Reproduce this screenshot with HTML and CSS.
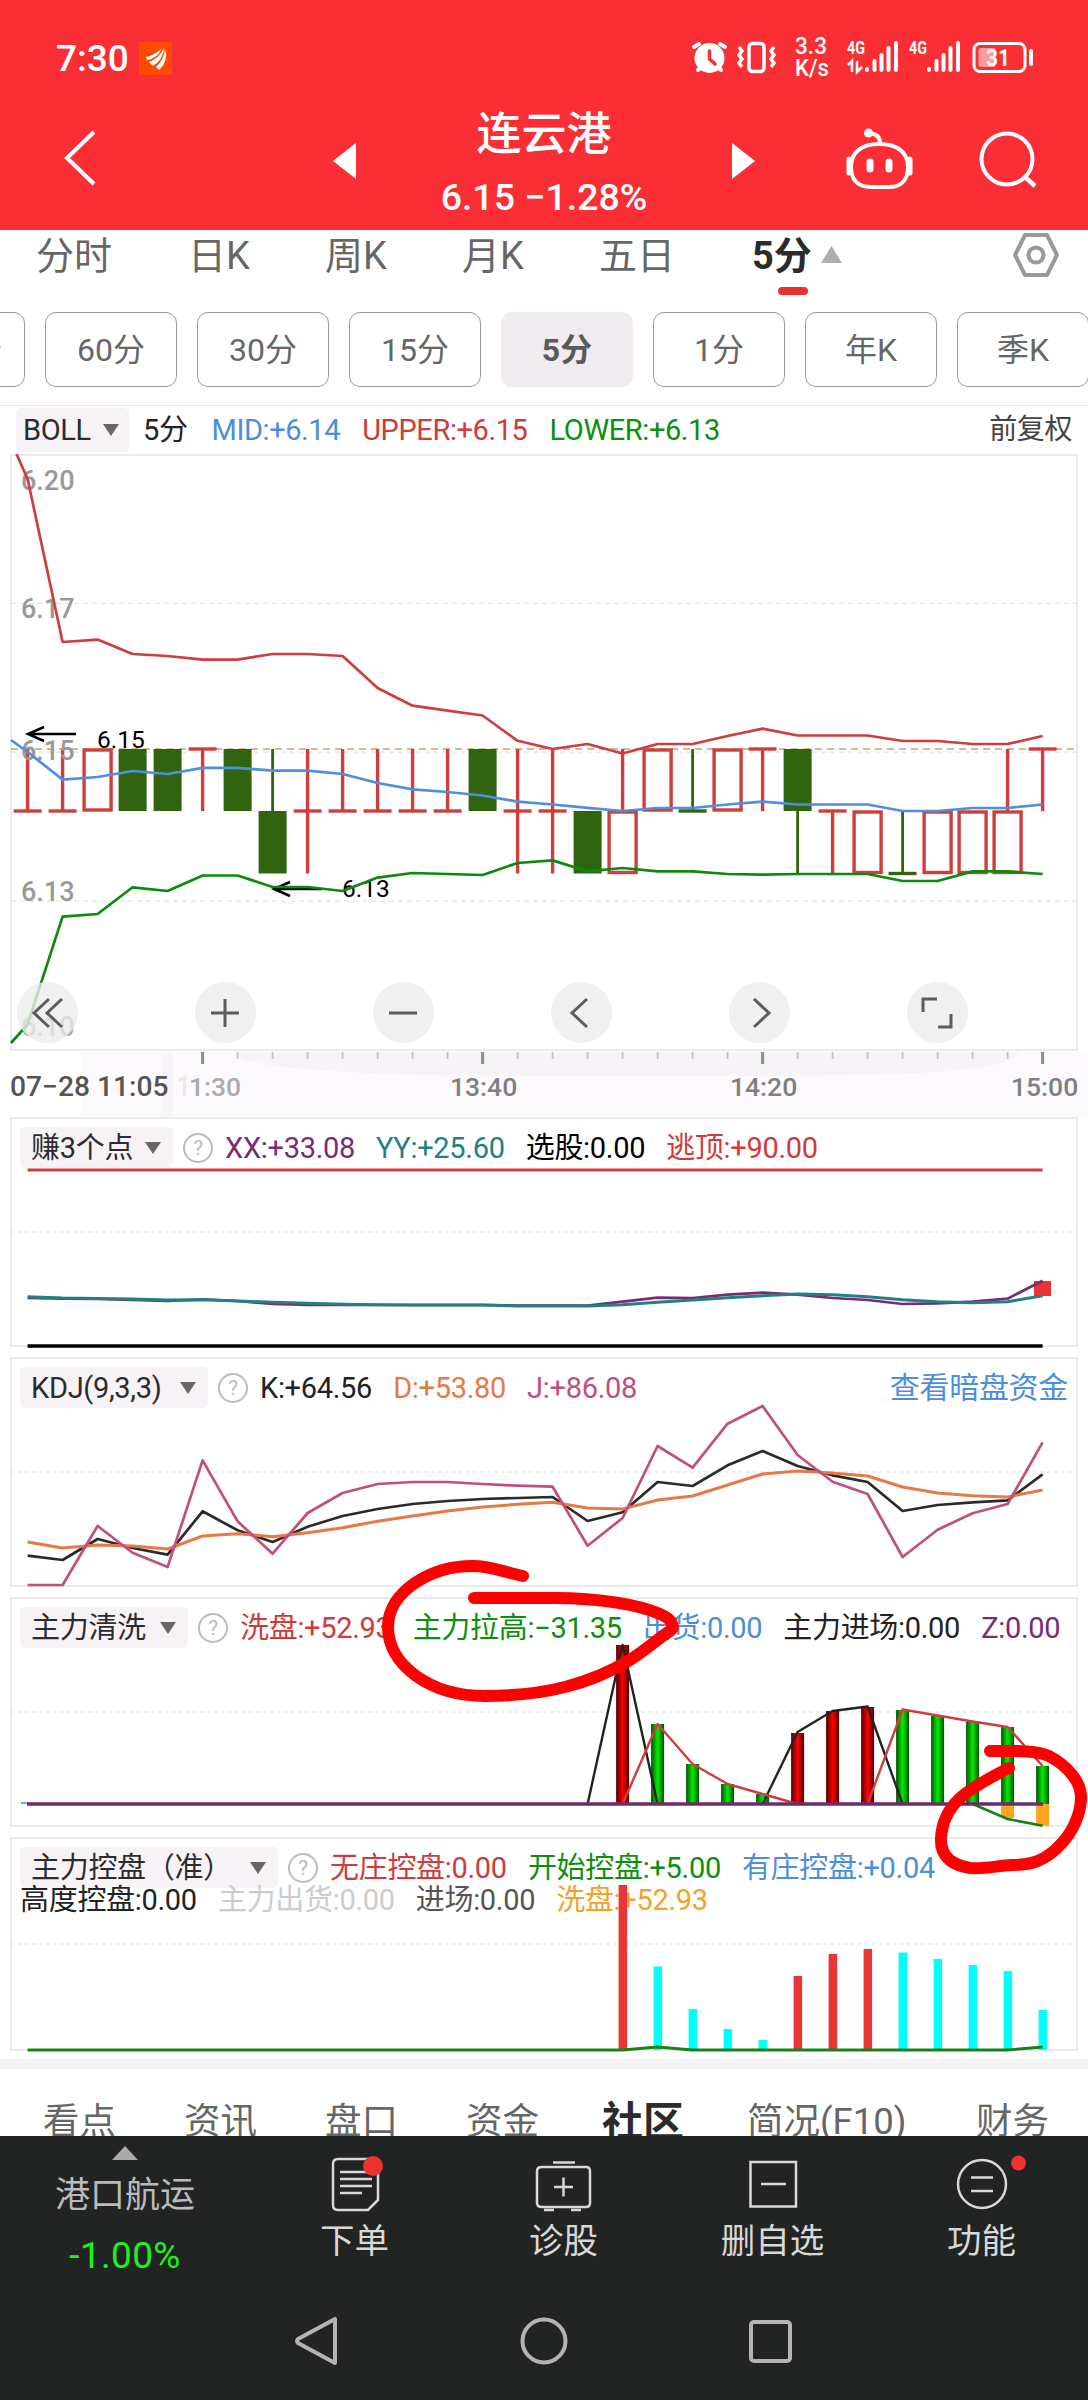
FILE: index.html
```
<!DOCTYPE html>
<html lang="zh-CN">

<head>
    <meta charset="UTF-8">
    <meta name="viewport" content="width=device-width, initial-scale=1.0">
    <title>连云港 5分</title>
    <link rel="stylesheet" href="styles.css">
</head>

<body>

    <header>
        <div class="status-bar">
            <span class="time">7:30</span>
            <svg class="app-icon" width="33" height="33" viewBox="0 0 33 33">
                <rect width="33" height="33" fill="#ff4a00" />
                <path d="M7 15 Q16 13 23 6 Q19 16 8 18 Z M10 20 Q20 16 25 6 Q24 18 14 24 Z M17 25 Q25 18 26 7 Q30 19 20 28 Z" fill="#fff" />
            </svg>
            <svg class="status-icons" width="346" height="48" viewBox="690 34 346 48">
                <!-- alarm -->
                <g stroke="#fff" stroke-width="4" stroke-linecap="round" fill="none">
                    <path d="M693 47 L698 44 M719 44 L724 47 M697 70 L701 66 M720 70 L716 66" />
                </g>
                <circle cx="708.5" cy="58" r="15" fill="#fff" />
                <path d="M708.5 51 V59 L714 64" stroke="#fa2e35" stroke-width="3.5" fill="none" stroke-linecap="round" />
                <!-- vibrate -->
                <rect x="748" y="43.5" width="15" height="28" rx="3.5" fill="none" stroke="#fff" stroke-width="3.5" />
                <path d="M738 47 l3 4 l-3 4 l3 4 l-3 4 l3 4 M773 47 l-3 4 l3 4 l-3 4 l3 4 l-3 4" stroke="#fff" stroke-width="3.5" fill="none" />
                <text x="794" y="54" class="net" textLength="32" lengthAdjust="spacingAndGlyphs">3.3</text>
                <text x="794" y="76" class="net" textLength="34" lengthAdjust="spacingAndGlyphs">K/s</text>
                <text x="846" y="54" class="sim" textLength="18" lengthAdjust="spacingAndGlyphs">4G</text>
                <text x="908" y="54" class="sim" textLength="18" lengthAdjust="spacingAndGlyphs">4G</text>
                <path d="M847 65 L851 61 V72 M856 61 V72 L861 67" stroke="#fff" stroke-width="2.5" fill="none" />
                <g stroke="#fff" stroke-width="4" stroke-linecap="round">
                    <path d="M866 69 v1 M873.5 61 v9 M880.5 55 v15 M887.5 48 v22 M895 43 v27" />
                    <path d="M928 69 v1 M935.5 61 v9 M942.5 55 v15 M949.5 48 v22 M957 43 v27" />
                </g>
                <rect x="973" y="43.5" width="51" height="28" rx="6" fill="none" stroke="#fff" stroke-width="3" />
                <rect x="977.5" y="48" width="17" height="19" rx="2" fill="#fd9a9d" />
                <rect x="1028" y="49" width="4" height="17" rx="2" fill="#fff" />
                <text x="985" y="66" class="battery" textLength="24" lengthAdjust="spacingAndGlyphs">31</text>
            </svg>
        </div>
        <div class="title-bar">
            <svg class="back" width="36" height="58" viewBox="0 0 36 58">
                <path d="M32 3 L5 29 L32 55" stroke="#fff" stroke-width="4" fill="none" />
            </svg>
            <svg class="prev" width="23" height="36" viewBox="0 0 23 36"><path d="M23 0 V36 L0 18 Z" fill="#fff" /></svg>
            <div class="stock">
                <h1>连云港</h1>
                <p>6.15 −1.28%</p>
            </div>
            <svg class="next" width="23" height="36" viewBox="0 0 23 36"><path d="M0 0 V36 L23 18 Z" fill="#fff" /></svg>
            <svg class="robot" width="68" height="62" viewBox="844 128 68 62">
                <path d="M868 133 Q879 134 879 143" stroke="#fff" stroke-width="4" fill="none" />
                <circle cx="867.5" cy="133" r="4.5" fill="#fff" />
                <path d="M878 144 C896 144 907 152 907 167 C907 180 900 187 888 187 H870 C857 187 850 180 850 167 C850 152 861 144 878 144 Z" stroke="#fff" stroke-width="4" fill="none" />
                <path d="M848 159 V173 M909 159 V173" stroke="#fff" stroke-width="5" stroke-linecap="round" />
                <path d="M869 162 V169 M888 162 V169" stroke="#fff" stroke-width="7" stroke-linecap="round" />
            </svg>
            <svg class="search" width="60" height="60" viewBox="977 130 60 60">
                <circle cx="1006" cy="159" r="25.5" stroke="#fff" stroke-width="4" fill="none" />
                <path d="M1024 177 L1034 186" stroke="#fff" stroke-width="4.5" />
            </svg>
        </div>
    </header>

    <!-- Period tabs -->
    <nav class="tabs">
        <a>分时</a>
        <a>日K</a>
        <a>周K</a>
        <a>月K</a>
        <a>五日</a>
        <a class="active">5分</a>
        <svg class="up" width="21" height="17" viewBox="0 0 21 17"><path d="M0 17 L10.5 0 L21 17 Z" fill="#b0adb0" /></svg>
        <svg class="settings" width="48" height="46" viewBox="0 0 48 46">
            <path d="M13 3 H35 L45 23 L35 43 H13 L3 23 Z" fill="none" stroke="#999" stroke-width="4" stroke-linejoin="round" />
            <circle cx="24" cy="23" r="7.5" fill="none" stroke="#999" stroke-width="4" />
        </svg>
    </nav>
    <div class="pills">
        <span>120分</span>
        <span>60分</span>
        <span>30分</span>
        <span>15分</span>
        <span class="active">5分</span>
        <span>1分</span>
        <span>年K</span>
        <span>季K</span>
    </div>

    <main class="charts">
        <div class="legend boll">
            <b class="pick">BOLL<i></i></b>
            <span class="ink">5分</span>
            <span class="blue">MID:+6.14</span>
            <span class="red">UPPER:+6.15</span>
            <span class="green">LOWER:+6.13</span>
            <span class="right">前复权</span>
        </div>

        <!-- Price chart -->
        <div class="price">
            <svg id="price" width="1088" height="598" viewBox="0 454 1088 598"></svg>
            <div class="tools">
                <button><svg width="60" height="60" viewBox="0 0 60 60"><path d="M32 16 L17 30 L32 44 M45 16 L30 30 L45 44" /></svg></button>
                <button><svg width="60" height="60" viewBox="0 0 60 60"><path d="M16 30 H44 M30 16 V44" /></svg></button>
                <button><svg width="60" height="60" viewBox="0 0 60 60"><path d="M16 30 H44" /></svg></button>
                <button><svg width="60" height="60" viewBox="0 0 60 60"><path d="M36 16 L21 30 L36 44" /></svg></button>
                <button><svg width="60" height="60" viewBox="0 0 60 60"><path d="M25 16 L40 30 L25 44" /></svg></button>
                <button><svg width="60" height="60" viewBox="0 0 60 60"><path d="M30 16 H16 V29 M44 31 V44 H31" /></svg></button>
            </div>
        </div>
        <svg id="axis" width="1088" height="65" viewBox="0 1052 1088 65"></svg>

        <section class="panel">
            <div class="legend">
                <b class="pick points">赚3个点<i></i></b><em>?</em>
                <span class="purple">XX:+33.08</span>
                <span class="teal">YY:+25.60</span>
                <span class="black">选股:0.00</span>
                <span class="red">逃顶:+90.00</span>
            </div>
            <svg id="points" width="1088" height="240" viewBox="0 1117 1088 240"></svg>
        </section>

        <section class="panel">
            <div class="legend">
                <b class="pick kdj">KDJ(9,3,3)<i></i></b><em>?</em>
                <span class="ink">K:+64.56</span>
                <span class="orange">D:+53.80</span>
                <span class="pink">J:+86.08</span>
                <span class="right blue more">查看暗盘资金</span>
            </div>
            <svg id="kdj" width="1088" height="240" viewBox="0 1357 1088 240"></svg>
        </section>

        <section class="panel">
            <div class="legend">
                <b class="pick wash">主力清洗<i></i></b><em>?</em>
                <span class="red">洗盘:+52.93</span>
                <span class="green">主力拉高:−31.35</span>
                <span class="blue">出货:0.00</span>
                <span class="ink">主力进场:0.00</span>
                <span class="purple">Z:0.00</span>
            </div>
            <svg id="wash" width="1088" height="240" viewBox="0 1597 1088 240"></svg>
        </section>

        <section class="panel last">
            <div class="legend">
                <b class="pick control">主力控盘（准）<i></i></b><em>?</em>
                <span class="red">无庄控盘:0.00</span>
                <span class="green">开始控盘:+5.00</span>
                <span class="blue">有庄控盘:+0.04</span>
            </div>
            <div class="legend second">
                <span class="ink">高度控盘:0.00</span>
                <span class="faint">主力出货:0.00</span>
                <span class="gray">进场:0.00</span>
                <span class="amber">洗盘:+52.93</span>
            </div>
            <svg id="control" width="1088" height="222" viewBox="0 1837 1088 222"></svg>
        </section>

        <!-- Hand drawn marks over the charts -->
        <svg class="marks" width="1088" height="330" viewBox="0 1555 1088 330">
            <path d="M523 1576 C500 1571 490 1566 473 1566 C430 1566 388 1592 388 1627 C388 1665 430 1696 485 1696 C545 1696 590 1684 630 1660 C650 1647 660 1637 670 1631 C676 1627 672 1619 660 1614 C640 1605 600 1598 555 1598 H474" />
            <path d="M990 1751 C1015 1751 1035 1750 1049 1756 C1068 1766 1081 1782 1081 1797 C1081 1815 1072 1832 1062 1843 C1045 1862 1030 1865 1012 1865 C996 1866 985 1869 970 1868 C950 1865 940 1855 941 1838 C943 1805 965 1790 1009 1768" />
        </svg>
    </main>

    <nav class="news-tabs">
        <a>看点</a>
        <a>资讯</a>
        <a>盘口</a>
        <a>资金</a>
        <a class="active">社区</a>
        <a>简况(F10)</a>
        <a>财务</a>
    </nav>

    <footer>
        <div class="actions">
            <div class="sector">
                <svg width="26" height="14" viewBox="0 0 26 14"><path d="M0 14 L13 0 L26 14 Z" fill="#aaa" /></svg>
                <span>港口航运</span>
                <strong>-1.00%</strong>
            </div>
            <div class="action">
                <svg width="70" height="64" viewBox="320 2154 70 64">
                    <path d="M338 2159 H372 Q378 2159 378 2165 V2200 L368 2210 H338 Q333 2210 333 2205 V2164 Q333 2159 338 2159 Z M340 2172 H372 M340 2179 H372 M340 2186 H372 M340 2193 H362" />
                    <circle class="dot" cx="373" cy="2166" r="10" />
                </svg>
                <span>下单</span>
            </div>
            <div class="action">
                <svg width="70" height="64" viewBox="530 2154 70 64">
                    <path d="M543 2167 H587 Q591 2167 591 2171 V2203 Q591 2207 587 2207 H543 Q538 2207 538 2203 V2171 Q538 2167 543 2167 Z M554 2162.5 H576 M555 2187 H574 M564.5 2177.5 V2196.5 M545 2210 H555 M572 2210 H582" />
                </svg>
                <span>诊股</span>
            </div>
            <div class="action">
                <svg width="70" height="64" viewBox="738 2154 70 64">
                    <path d="M750.5 2162 H796 V2206.5 H750.5 Z M761 2184 H786" />
                </svg>
                <span>删自选</span>
            </div>
            <div class="action">
                <svg width="90" height="64" viewBox="937 2154 90 64">
                    <circle cx="982" cy="2184" r="24" />
                    <path d="M971 2177.5 H993 M971 2191 H993" />
                    <circle class="dot" cx="1018.5" cy="2163" r="7.5" />
                </svg>
                <span>功能</span>
            </div>
        </div>
        <div class="system-nav">
            <svg width="48" height="56" viewBox="0 0 48 56"><path d="M41 6 V50 L4 30 Q2 28 4 26 Z" /></svg>
            <svg width="56" height="56" viewBox="0 0 56 56"><circle cx="28" cy="28" r="21.5" /></svg>
            <svg width="48" height="56" viewBox="0 0 48 56"><rect x="5" y="9" width="39" height="39" rx="3" /></svg>
        </div>
    </footer>

    <script>
        const RED = '#cd3e3c', GREEN = '#0d8a0d', BLUE = '#4f8fdb';

        function x(i) {
            return 27.6 + 35 * i;
        }

        function line(x1, y1, x2, y2, color, width, extra) {
            return `<line x1="${x1}" y1="${y1}" x2="${x2}" y2="${y2}" stroke="${color}" stroke-width="${width}" ${extra || ''}/>`;
        }

        function rect(left, top, w, h, fill) {
            return `<rect x="${left}" y="${top}" width="${w}" height="${h}" fill="${fill}"/>`;
        }

        function text(left, y, size, color, value, weight) {
            return `<text x="${left}" y="${y}" font-size="${size}" fill="${color}" font-weight="${weight || 400}">${value}</text>`;
        }

        function curve(values, color, width, start, before) {
            const points = values.map((y, i) => x(i + (start || 0)) + ',' + y);
            if (before) points.unshift(before);
            return `<polyline points="${points.join(' ')}" fill="none" stroke="${color}" stroke-width="${width}" stroke-linejoin="round"/>`;
        }

        function frame(top, bottom, grid) {
            return `<rect x="11" y="${top}" width="1066" height="${bottom - top}" fill="none" stroke="#ebebeb" stroke-width="2"/>` +
                line(11, grid, 1077, grid, '#e8e8e8', 1.6, 'stroke-dasharray="3.5 3.5"');
        }

        // Candles: [kind, wick top, wick bottom, body top, body bottom]
        const A = 749, B = 811, C = 873.5;
        const candles = [
            ['r', A, B, B, B], ['r', A, B, B, B], ['r', A, A, A, B], ['g', A, A, A, B], ['g', A, A, A, B],
            ['r', A, B, A, A], ['g', A, A, A, B], ['g', A, B, B, C], ['r', A, C, B, B], ['r', A, B, B, B],
            ['r', A, B, B, B], ['r', A, B, B, B], ['r', A, B, B, B], ['g', A, A, A, B], ['r', A, C, B, B],
            ['r', A, C, B, B], ['g', B, B, B, C], ['r', A, B, B, C], ['r', A, A, A, B], ['g', A, B, B, B],
            ['r', A, A, A, B], ['r', A, B, A, A], ['g', B, C, A, B], ['r', B, C, B, B], ['r', B, B, B, C],
            ['g', B, C, C, C], ['r', B, B, B, C], ['r', B, B, B, C], ['r', A, B, B, C], ['r', A, B, A, A]
        ];
        const upper = [479, 642, 639.6, 654, 656, 659.6, 659.6, 654, 654, 656, 688, 705.7, 710.6, 715.5, 740.8,
            749, 744, 753.5, 744, 744, 736, 728.6, 735.5, 735.5, 735.5, 741, 741, 744, 744, 736];
        const mid = [752, 779.6, 777, 771, 774, 767.8, 767.8, 770.6, 770.6, 774, 783, 789.4, 792, 795.5, 801.6,
            804.5, 807.8, 811, 808, 808, 804.5, 801.6, 804.5, 804.5, 804.5, 811, 811, 808, 808, 804.5];
        const lower = [1024.5, 916.7, 914, 887.3, 891, 875.5, 875.5, 887, 887, 891, 877.6, 873, 874, 875, 863,
            860.4, 871.4, 868, 871.4, 871.4, 874, 874.7, 874, 874, 874, 881, 881, 871.4, 871.4, 874];

        let price = '<rect x="11" y="455" width="1066" height="595" fill="none" stroke="#ebebeb" stroke-width="2"/>';
        [603.3, 752.2, 901.2].forEach(y => {
            price += line(11, y, 1077, y, '#e4e4e4', 1.3, 'stroke-dasharray="5 4"');
        });
        price += line(11, A, 1077, A, '#c9a26a', 1.5, 'stroke-dasharray="7 5"');
        candles.forEach((c, i) => {
            const red = c[0] === 'r';
            const color = red ? RED : '#30640f';
            if (c[1] !== c[2]) price += line(x(i), c[1], x(i), c[2], color, red ? 3.4 : 2.8);
            if (c[3] === c[4]) {
                price += line(x(i) - 14, c[3], x(i) + 14, c[3], color, 3.4);
            } else if (red) {
                price += `<rect x="${x(i) - 13.5}" y="${c[3] + 1}" width="27" height="${c[4] - c[3] - 2}" fill="#fff" stroke="${color}" stroke-width="3.4"/>`;
            } else {
                price += rect(x(i) - 14, c[3], 28, c[4] - c[3], color);
            }
        });
        price += text(21, 490, 27, '#999', '6.20', 500) + text(21, 618, 27, '#999', '6.17', 500) +
            text(21, 760, 27, '#999', '6.15', 500) + text(21, 901, 27, '#999', '6.13', 500) +
            text(21, 1036, 27, '#999', '6.10', 500);
        price += '<path d="M76 734 H28 M44 727 L28 734 L44 741 M322 889 H274 M290 882 L274 889 L290 896" stroke="#000" stroke-width="2.5" fill="none"/>';
        price += text(97, 748, 24.5, '#000', '6.15') + text(342, 897, 24.5, '#000', '6.13');
        price += curve(upper, RED, 2.7, 0, '16.5,454') + curve(mid, BLUE, 2.7, 0, '11,740') + curve(lower, GREEN, 2.7, 0, '11,1043');
        document.getElementById('price').innerHTML = price;

        // Time axis
        let axis = rect(81, 1052, 1007, 66, '#fdfafd') + rect(161, 1052, 12, 66, '#f8f5f8') +
            '<path d="M235 1052 H1020 Q1010 1066 960 1070 Q900 1077 600 1076 Q240 1078 235 1052 Z" fill="#f7f4f7"/>';
        for (let i = 5; i < 30; i++) {
            const major = i % 8 === 5;
            axis += line(x(i), 1052, x(i), major ? 1064 : 1059, major ? '#8c8c8c' : '#c2c0c2', major ? 3 : 1.8);
        }
        axis += text(176, 1096, 27, '#eae6ea', '1', 500) + text(189, 1096, 26.5, '#aaa', '1:30', 500) +
            text(450, 1096, 26.5, '#808080', '13:40', 500) + text(730, 1096, 26.5, '#808080', '14:20', 500) +
            text(1011, 1096, 26.5, '#808080', '15:00', 500) + text(10, 1096, 28.2, '#555', '07−28 11:05', 500);
        document.getElementById('axis').innerHTML = axis;

        const xx = [1298, 1298.7, 1299, 1300, 1301, 1299.3, 1301, 1304, 1305, 1305, 1305, 1305, 1305, 1305, 1305.6,
            1305.6, 1305.6, 1301.7, 1297.7, 1298, 1294.7, 1292.7, 1294.7, 1298, 1300, 1304, 1303.3, 1301.7, 1298.7, 1280.7];
        const yy = [1296.7, 1298, 1298.5, 1299, 1300, 1299.7, 1301, 1302.3, 1303.3, 1304.3, 1304.7, 1305, 1305, 1305, 1306,
            1306, 1306, 1304.7, 1302.3, 1300, 1297.7, 1295.7, 1294, 1294.7, 1296.7, 1299.7, 1301.7, 1302.7, 1301.7, 1295.7];
        document.getElementById('points').innerHTML = frame(1118, 1346, 1232) +
            line(27.6, 1170, 1042.6, 1170, RED, 3) + line(27.6, 1346, 1042.6, 1346, '#000', 3.6) +
            rect(1034, 1281, 17, 15, '#ee3131') + curve(xx, '#7a2b74', 2.7) + curve(yy, '#237f85', 3);

        const k = [1555.7, 1560, 1539, 1548, 1554.7, 1511.3, 1530.3, 1542, 1526.7, 1516, 1509, 1504, 1501, 1499, 1498,
            1497, 1521, 1512.3, 1482, 1486, 1465.3, 1451, 1466, 1475.3, 1482, 1511, 1505, 1502.3, 1500.3, 1474.3];
        const d = [1542, 1548, 1545, 1546, 1549, 1536, 1533.7, 1536.7, 1532.7, 1527.7, 1521.3, 1516, 1511, 1507, 1504.3,
            1502.3, 1508, 1509, 1500, 1496, 1485, 1474, 1471, 1473, 1476, 1487, 1493, 1495.7, 1497, 1490];
        const j = [1585, 1585, 1526, 1552.7, 1567, 1460.3, 1521.3, 1553.7, 1513, 1493, 1484, 1482, 1482, 1484, 1485.7,
            1486.7, 1545.7, 1518, 1446, 1467.7, 1423.7, 1406, 1455, 1481.7, 1494, 1557, 1529.7, 1513.3, 1504, 1442.3];
        document.getElementById('kdj').innerHTML = frame(1358, 1586, 1472) +
            curve(k, '#2a2a2a', 2.7) + curve(d, '#e57a47', 3) + curve(j, '#c24e80', 2.7);

        const base = 1804;
        const bars = [
            [17, 'r', 1645], [18, 'g', 1724], [19, 'g', 1764], [20, 'g', 1784], [21, 'g', 1794], [22, 'r', 1733],
            [23, 'r', 1711], [24, 'r', 1707], [25, 'g', 1710], [26, 'g', 1716], [27, 'g', 1721.5], [28, 'g', 1727], [29, 'g', 1766]
        ];
        let wash = '<defs><linearGradient id="gr"><stop offset="0" stop-color="#500"/><stop offset=".5" stop-color="#f00"/><stop offset="1" stop-color="#500"/></linearGradient>' +
            '<linearGradient id="gg"><stop offset="0" stop-color="#064f06"/><stop offset=".5" stop-color="#00ee00"/><stop offset="1" stop-color="#064f06"/></linearGradient></defs>' +
            frame(1598, 1826, 1712);
        bars.forEach(b => {
            wash += rect(x(b[0]) - 6.5, b[2], 13, base - b[2], b[1] === 'r' ? 'url(#gr)' : 'url(#gg)');
        });
        wash += rect(x(28) - 6.5, base, 13, 14, '#ffa51f') + rect(x(29) - 6.5, base, 13, 22, '#ffa51f');
        wash += curve([base, 1645, base], '#222', 2.4, 16) + curve([base, 1732, 1711, 1706.5, base], '#222', 2.4, 21) +
            curve([base, 1724, 1764, 1784, 1794, base], RED, 2.4, 17) +
            curve([base, 1709.5, 1715.5, 1721.5, 1727, 1766], RED, 2.4, 24) +
            curve([base, 1819, 1825.7], '#158015', 2.5, 27) +
            line(21, 1803, 28, 1803, '#7fa9d8', 2) + line(27, base, 1043, base, '#6b2d6b', 3.6);
        document.getElementById('wash').innerHTML = wash;

        const control = [
            [17, 'r', 1885], [18, 'c', 1966.5], [19, 'c', 2009], [20, 'c', 2029], [21, 'c', 2040], [22, 'r', 1976],
            [23, 'r', 1954], [24, 'r', 1949], [25, 'c', 1952.5], [26, 'c', 1959], [27, 'c', 1965], [28, 'c', 1971], [29, 'c', 2010]
        ];
        let ctl = frame(1838, 2050, 1944);
        control.forEach(b => {
            ctl += rect(x(b[0]) - 4, b[2], 8.5, 2050 - b[2], b[1] === 'r' ? '#e93535' : '#00ffff');
        });
        const flat = Array(30).fill(2050);
        flat[18] = flat[29] = 2047;
        ctl += curve(flat, '#178217', 2.8);
        document.getElementById('control').innerHTML = ctl;
    </script>
</body>

</html>
```
FILE: styles.css
```
body {
    margin: 0;
    width: 1088px;
    height: 2400px;
    overflow: hidden;
    background: #fff;
    font-family: Roboto, "Noto Sans CJK SC", sans-serif;
    color: #666;
    display: flex;
    flex-direction: column;
}

svg {
    display: block;
    flex: none;
}

header {
    background: #fa2e35;
    color: #fff;
    height: 230px;
    flex: none;
}

.status-bar {
    display: flex;
    align-items: center;
    height: 66px;
    padding: 25px 51px 0 56px;
}

.time {
    font-size: 37px;
    font-weight: 500;
    width: 83px;
}

.status-icons {
    margin-left: auto;
}

.net {
    font-size: 23px;
    font-weight: 500;
    fill: #fff;
}

.sim {
    font-size: 19px;
    font-weight: 700;
    fill: #fff;
}

.battery {
    font-size: 23px;
    font-weight: 700;
    fill: #fff;
}

.title-bar {
    display: flex;
    height: 139px;
    padding-left: 62px;
}

.back {
    margin: 38px 235px 0 0;
}

.prev,
.next {
    margin-top: 52px;
}

.stock {
    width: 376px;
    text-align: center;
}

.stock h1 {
    margin: 14px 0 0;
    font-size: 45px;
    line-height: 60px;
    font-weight: 500;
}

.stock p {
    margin: 10px 0 0;
    font-size: 37.5px;
    line-height: 44px;
    font-weight: 500;
}

.robot {
    margin: 37px 0 0 90px;
}

.search {
    margin: 39px 0 0 65px;
}

.tabs {
    display: flex;
    height: 82px;
    flex: none;
    padding-left: 36px;
    font-size: 38px;
    line-height: 52px;
}

.tabs a {
    flex: none;
    width: 137px;
    white-space: nowrap;
}

.tabs a:first-child {
    width: 152px;
}

.tabs a:nth-child(5) {
    width: 153px;
}

.tabs .active {
    position: relative;
    width: 69px;
    color: #2b2b2b;
    font-weight: 700;
}

.tabs .active::after {
    content: "";
    position: absolute;
    left: 26px;
    top: 57px;
    width: 30px;
    height: 8px;
    border-radius: 4px;
    background: #e93030;
}

.tabs .up {
    margin-top: 16px;
}

.tabs .settings {
    margin: 2px 28px 0 auto;
}

.pills {
    display: flex;
    gap: 20px;
    height: 93px;
    flex: none;
    overflow: hidden;
}

.pills span {
    flex: none;
    width: 132px;
    height: 75px;
    box-sizing: border-box;
    border: 1.5px solid #999;
    border-radius: 11px;
    font-size: 32px;
    line-height: 75px;
    text-align: center;
}

.pills span:first-child {
    margin-left: -107px;
}

.pills .active {
    background: #efebef;
    border-color: #efebef;
    font-weight: 700;
    color: #5a5a5a;
}

.charts {
    position: relative;
    flex: none;
    height: 1654px;
    border-bottom: 10px solid #f5f5f5;
}

.legend {
    display: flex;
    align-items: center;
    gap: 21px;
    height: 41px;
    padding: 10px 20px 0;
    font-size: 29px;
    line-height: 34px;
    letter-spacing: -0.3px;
    white-space: nowrap;
}

.legend.boll {
    height: 44px;
    padding: 3px 16px 2px;
    box-shadow: inset 0 1px #e8e8e8;
    letter-spacing: -0.4px;
}

.legend.second {
    height: 30px;
    padding-top: 0;
    margin-top: -3px;
}

.pick {
    display: flex;
    box-sizing: border-box;
    align-items: center;
    justify-content: space-between;
    height: 41px;
    padding: 0 12px 0 11px;
    border-radius: 5px;
    background: #f6f2f6;
    color: #2c2c2c;
    font-weight: 400;
}

.pick.points { width: 153px; }
.pick.kdj { width: 188px; }
.pick.wash { width: 168px; }
.pick.control { width: 258px; }

.boll .pick {
    width: 113px;
    height: 44px;
    padding: 0 10px 0 7px;
    margin-right: -7px;
}

.boll .blue {
    margin-left: 3px;
}

.boll .red,
.boll .green {
    margin-left: 1px;
}

.boll .right {
    font-size: 28px;
}

.pick i {
    border: 8.5px solid transparent;
    border-top: 12px solid #666;
    border-bottom: 0;
}

.legend em {
    width: 26px;
    height: 26px;
    margin: 0 -9px 0 -11px;
    border: 2px solid #bbb;
    border-radius: 50%;
    color: #bbb;
    font-size: 21px;
    font-style: normal;
    line-height: 27px;
    text-align: center;
}

.right {
    margin-left: auto;
    color: #444;
}

.red { color: #d03a3a; }
.green { color: #0c8f0c; }
.blue { color: #4b8edc; }
.purple { color: #7a2b74; }
.teal { color: #237f85; }
.orange { color: #e57a47; }
.pink { color: #c24e80; }
.amber { color: #f2a22c; }
.ink { color: #222; }
.black { color: #000; }
.gray { color: #555; }
.faint { color: #ccc; }

.more {
    font-size: 30px;
}

.price {
    position: relative;
}

.tools {
    position: absolute;
    left: 17px;
    top: 528px;
    display: flex;
    gap: 117px;
}

.tools button {
    width: 61px;
    height: 61px;
    padding: 0;
    border: 0;
    border-radius: 50%;
    background: rgba(236, 236, 236, 0.8);
}

.tools path {
    fill: none;
    stroke: #5c5c5c;
    stroke-width: 3;
}

.panel {
    display: grid;
    grid-template-columns: 1088px;
    grid-template-rows: 51px 1fr;
    height: 240px;
}

.panel.last {
    height: 222px;
}

.panel .legend {
    grid-area: 1 / 1;
}

.panel .legend.second {
    grid-area: 2 / 1;
}

/* the drawing runs over its own legend */
.panel > svg {
    grid-area: 1 / 1 / 3 / 2;
}

.marks {
    position: absolute;
    left: 0;
    top: 1150px;
}

.marks path {
    fill: none;
    stroke: #f00;
    stroke-width: 12;
    stroke-linecap: round;
    stroke-linejoin: round;
}

.news-tabs {
    display: flex;
    height: 67px;
    flex: none;
    padding-left: 43px;
    overflow: hidden;
    font-size: 36.5px;
    line-height: 106px;
    white-space: nowrap;
}

.news-tabs a {
    flex: none;
    width: 141px;
}

.news-tabs a:nth-child(4) {
    width: 136px;
}

.news-tabs .active {
    width: 145px;
    color: #2b2b2b;
    font-size: 41px;
    font-weight: 700;
}

.news-tabs a:nth-child(6) {
    width: 229px;
}

.news-tabs a:last-child {
    width: 110px;
}

footer {
    flex: 1;
    background: #222423;
    color: #d8d8d8;
}

.actions {
    display: flex;
    height: 156px;
    font-size: 35px;
}

.sector {
    display: flex;
    flex: none;
    flex-direction: column;
    align-items: center;
    width: 250px;
    padding-top: 10px;
    color: #bbb;
}

.sector span {
    line-height: 50px;
    margin-top: 11px;
}

.sector strong {
    margin-top: 9px;
    color: #1ff01f;
    font-size: 37px;
    font-weight: 400;
    line-height: 52px;
    letter-spacing: 0.3px;
}

.action {
    display: flex;
    flex: none;
    flex-direction: column;
    align-items: center;
    width: 209px;
    padding-top: 18px;
    font-size: 34.5px;
    line-height: 46px;
}

.action path,
.action circle {
    fill: none;
    stroke: #d8d8d8;
    stroke-width: 2.5;
}

.action .dot {
    fill: #ee3131;
    stroke: none;
}

.system-nav {
    display: flex;
    justify-content: space-between;
    width: 500px;
    margin: 21px 0 0 294px;
}

.system-nav path,
.system-nav circle,
.system-nav rect {
    fill: none;
    stroke: #b5b3b5;
    stroke-width: 4;
    stroke-linejoin: round;
}
```
